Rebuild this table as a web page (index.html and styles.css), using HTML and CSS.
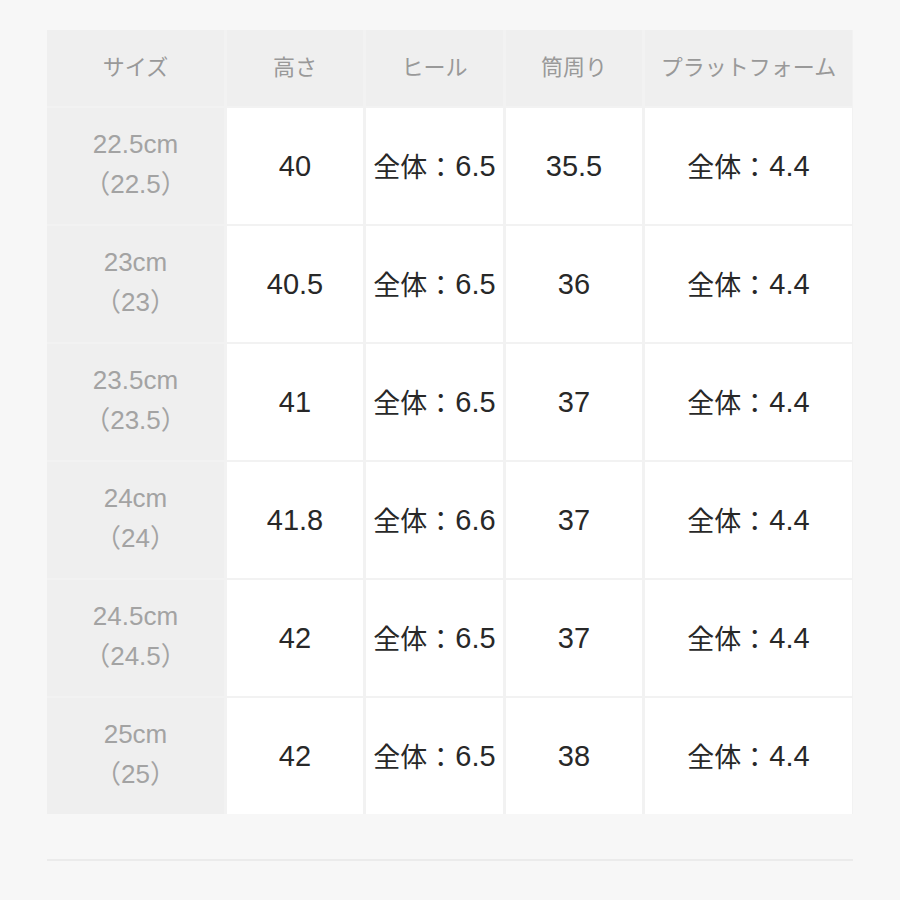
FILE: index.html
```html
<!DOCTYPE html>
<html lang="ja">
<head>
<meta charset="utf-8">
<link rel="stylesheet" href="styles.css">
</head>
<body>
<div class="page">
  <div class="table">
    <div class="cell head">サイズ</div>
    <div class="cell head">高さ</div>
    <div class="cell head">ヒール</div>
    <div class="cell head">筒周り</div>
    <div class="cell head">プラットフォーム</div>

    <div class="cell size"><span>22.5cm</span><span>（22.5）</span></div>
    <div class="cell">40</div>
    <div class="cell"><span class="jp">全体：</span>6.5</div>
    <div class="cell">35.5</div>
    <div class="cell"><span class="jp">全体：</span>4.4</div>

    <div class="cell size"><span>23cm</span><span>（23）</span></div>
    <div class="cell">40.5</div>
    <div class="cell"><span class="jp">全体：</span>6.5</div>
    <div class="cell">36</div>
    <div class="cell"><span class="jp">全体：</span>4.4</div>

    <div class="cell size"><span>23.5cm</span><span>（23.5）</span></div>
    <div class="cell">41</div>
    <div class="cell"><span class="jp">全体：</span>6.5</div>
    <div class="cell">37</div>
    <div class="cell"><span class="jp">全体：</span>4.4</div>

    <div class="cell size"><span>24cm</span><span>（24）</span></div>
    <div class="cell">41.8</div>
    <div class="cell"><span class="jp">全体：</span>6.6</div>
    <div class="cell">37</div>
    <div class="cell"><span class="jp">全体：</span>4.4</div>

    <div class="cell size"><span>24.5cm</span><span>（24.5）</span></div>
    <div class="cell">42</div>
    <div class="cell"><span class="jp">全体：</span>6.5</div>
    <div class="cell">37</div>
    <div class="cell"><span class="jp">全体：</span>4.4</div>

    <div class="cell size"><span>25cm</span><span>（25）</span></div>
    <div class="cell">42</div>
    <div class="cell"><span class="jp">全体：</span>6.5</div>
    <div class="cell">38</div>
    <div class="cell"><span class="jp">全体：</span>4.4</div>
  </div>
  <div class="rule"></div>
</div>
</body>
</html>
```
FILE: styles.css
```css
html, body {
  margin: 0;
  padding: 0;
  background: #f7f7f7;
}
body {
  width: 900px;
  height: 900px;
  font-family: "Liberation Sans", "Noto Sans CJK JP", sans-serif;
}
.page {
  padding: 30px 47px 0 47px;
}
.table {
  display: grid;
  grid-template-columns: 177px 136px 137px 136px 207px;
  grid-template-rows: 76px repeat(6, 116px);
  column-gap: 3px;
  row-gap: 2px;
  background: #f2f2f2;
}
.cell {
  background: #ffffff;
  display: flex;
  align-items: center;
  justify-content: center;
  color: #282828;
  font-size: 29px;
  line-height: 34px;
  white-space: nowrap;
}
.jp {
  font-family: "Noto Sans CJK JP", sans-serif;
  font-size: 27px;
  line-height: 34px;
  margin-right: 1px;
}
.head {
  background: #efefef;
  color: #999999;
  font-size: 22px;
  padding-bottom: 1px;
}
.size {
  background: #efefef;
  color: #a3a3a3;
  font-size: 26px;
  flex-direction: column;
  line-height: 40px;
  padding-bottom: 4px;
}
.rule {
  margin-top: 45px;
  height: 2px;
  background: #ebebeb;
}
```
